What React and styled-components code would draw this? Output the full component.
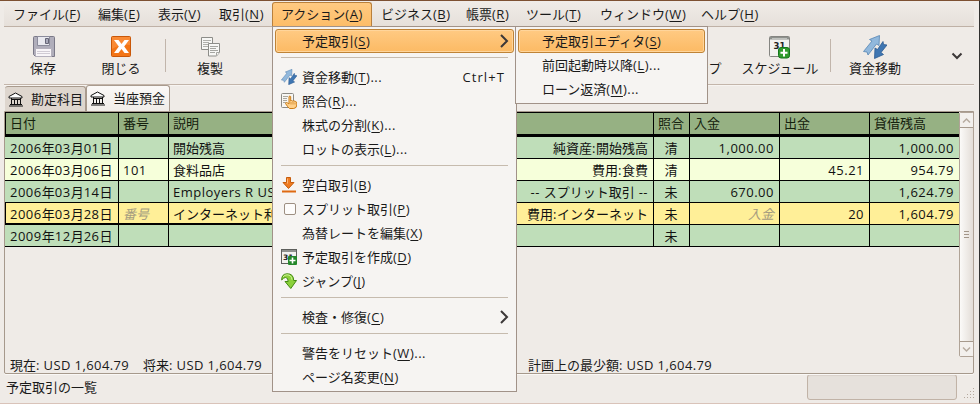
import React from "react";
import styled, { createGlobalStyle, css } from "styled-components";

const Global = createGlobalStyle`
  * { box-sizing: border-box; }
  body {
    margin: 0;
    background: #efebe7;
    font-family: "Open Sans", "Noto Sans CJK JP", sans-serif;
    font-size: 13px;
    line-height: 20px;
    color: #1a1a1a;
  }
`;

/* ---------- text ---------- */
const Label = styled.span`
  white-space: pre;
  font-family: "Noto Sans CJK JP", sans-serif;
  line-height: 20px;
`;
const Latin = styled.span`
  font-family: "Open Sans", sans-serif;
  letter-spacing: ${(p) => p.$ls}px;
`;
const Mnemonic = styled.span`
  text-decoration: underline;
  text-decoration-thickness: 1px;
  text-underline-offset: 2px;
  text-decoration-skip-ink: none;
`;
const Text = ({ children, k, tail = "", ls = 0.5 }) => (
  <Label>
    {children.split(/([\x20-\x7e]+)/).map((run, i) =>
      i % 2 ? <Latin key={i} $ls={ls}>{run}</Latin> : run
    )}
    {k && (
      <Latin $ls={ls}>
        (<Mnemonic>{k}</Mnemonic>){tail}
      </Latin>
    )}
  </Label>
);

/* ---------- window ---------- */
const Window = styled.div`
  position: relative;
  width: 980px;
  height: 404px;
  overflow: hidden;
  display: flex;
  flex-direction: column;
  padding: 0 5px 0 4px;
  background: #efebe7;
  border-top: 1px solid #7d5132;
  border-right: 1px solid #30302f;
  border-bottom: 1px solid #d9c3b9;
`;
const MenuBar = styled.nav`
  display: flex;
  height: 26px;
  flex: none;
  border-bottom: 1px solid #bfb1a6;
  background: linear-gradient(#f0ece8, #e6e0da);
`;
const MenuTitle = styled.div`
  width: ${(p) => p.$w}px;
  height: ${(p) => (p.$active ? 24 : 25)}px;
  margin-top: ${(p) => (p.$active ? 1 : 0)}px;
  padding: ${(p) => (p.$active ? 1 : 3)}px 0 0 ${(p) => (p.$active ? 8 : 9)}px;
  ${(p) =>
    p.$active &&
    css`
      border: 1px solid #b9803c;
      border-bottom: 0;
      border-radius: 3px 3px 0 0;
      background: linear-gradient(#ffca82, #fdbd68);
    `}
`;
const ToolBar = styled.div`
  display: flex;
  flex: none;
  height: 58px;
  border-bottom: 1px solid #c3b5aa;
  box-shadow: 0 1px #f7f4f1;
  padding-top: 7px;
`;
const Tool = styled.div`
  width: ${(p) => p.$w}px;
  display: flex;
  flex-direction: column;
  align-items: center;
  svg { width: 24px; height: 24px; display: block; margin: 1px 0 -1px; }
`;
const ToolSeparator = styled.div`
  width: 1px;
  height: 33px;
  margin-top: 5px;
  background: #c1b5ab;
`;
const Spacer = styled.div`
  width: ${(p) => p.$w}px;
  flex: none;
`;
const Overflow = styled.div`
  padding-top: 18px;
  svg { width: 12px; height: 8px; display: block; }
`;

/* ---------- notebook ---------- */
const Tabs = styled.div`
  display: flex;
  align-items: flex-end;
  height: 26px;
  flex: none;
  padding-left: 1px;
`;
const Tab = styled.div`
  display: flex;
  width: ${(p) => p.$w}px;
  height: ${(p) => (p.$active ? 26 : 25)}px;
  padding: ${(p) => (p.$active ? "2px 0 0 3px" : "2px 0 0 3px")};
  border: 1px solid #a99b8e;
  border-bottom: 0;
  border-left-width: ${(p) => (p.$active ? 1 : 0)}px;
  border-radius: 3px 3px 0 0;
  background: ${(p) => (p.$active ? "linear-gradient(#fbf9f7, #f0ece8)" : "#ded6ce")};
  svg { width: 16px; height: 16px; margin: 2px 7px 0 0; flex: none; }
`;
const Page = styled.div`
  position: relative;
  display: flex;
  flex-direction: column;
  height: 263px;
  flex: none;
  border: 1px solid #a6998c;
  border-radius: 0 0 2px 2px;
  box-shadow: 0 1px #faf8f6;
`;
const PageBody = styled.div`
  display: flex;
  height: 245px;
`;
const Register = styled.div`
  width: 954px;
`;
const columns = "114px 50px 230px 255px 36px 90px 90px 89px";
const Row = styled.div`
  display: grid;
  grid-template-columns: ${columns};
  height: ${(p) => (p.$head ? 25 : 22)}px;
  background: ${(p) => p.$bg};
  color: ${(p) => (p.$head ? "#14200d" : "#111")};
  border-bottom: ${(p) => (p.$head ? 3 : 1)}px solid #000;
  border-top: ${(p) => (p.$head ? 1 : 0)}px solid #000;
`;
const Cell = styled.div`
  display: flex;
  justify-content: ${(p) => p.$align || "flex-start"};
  height: 100%;
  min-width: 0;
  overflow: hidden;
  padding: ${(p) => (p.$head ? 0 : 1)}px 5px 0 4px;
  border-right: ${(p) => (p.$last ? 0 : 1)}px solid #000;
  ${(p) => p.$first && css`border-left: 1px solid ${p.$edge ? "#000" : "transparent"};`}
  ${(p) => p.$thick && css`box-shadow: inset 0 -1px #000;`}
  ${(p) => p.$hint && css`color: #a59c80; font-style: italic;`}
`;
const ScrollBar = styled.div`
  width: 15px;
  height: 245px;
  display: flex;
  flex-direction: column;
  justify-content: space-between;
  align-items: center;
  border: 1px solid #b0a397;
  border-radius: 2px;
  background: linear-gradient(90deg, #fbfaf8, #e3ddd7);
`;
const ScrollButton = styled.div`
  width: 13px;
  height: 15px;
  display: flex;
  align-items: center;
  justify-content: center;
  background: #f3f0ed;
  border: 0 solid #a6998c;
  ${(p) => (p.$up ? "border-bottom-width: 1px;" : "border-top-width: 1px;")}
  svg { width: 9px; height: 7px; }
`;
const Grip = styled.div`
  width: 5px;
  height: 7px;
  border: solid #a39688;
  border-width: 1px 0;
  background: linear-gradient(transparent 2px, #a39688 2px, #a39688 3px, transparent 3px);
`;
const Summary = styled.div`
  display: flex;
  padding-left: 5px;
  margin-top: -2px;
`;
const SummaryItem = styled.div`
  width: ${(p) => p.$w}px;
`;

/* ---------- status ---------- */
const StatusBar = styled.footer`
  display: flex;
  justify-content: space-between;
  height: 29px;
  padding: 3px 17px 0 2px;
`;
const Progress = styled.div`
  width: 150px;
  height: 26px;
  margin-top: -3px;
  border: 1px solid #c1b3a7;
  border-radius: 3px;
  background: #e6e1dc;
  box-shadow: inset 0 1px 1px #d9d1ca;
`;
const ResizeGrip = styled.svg`
  position: absolute;
  right: 3px;
  bottom: 3px;
  width: 12px;
  height: 12px;
`;

/* ---------- popup menus ---------- */
const Popup = styled.div`
  position: absolute;
  left: ${(p) => p.$x}px;
  top: 25px;
  width: ${(p) => p.$w}px;
  padding: 2px;
  border: 1px solid #a19288;
  background: #f6f4f2;
`;
const Item = styled.div`
  display: grid;
  grid-template-columns: ${(p) => p.$indent}px 1fr auto;
  align-items: center;
  height: 24px;
  border: 1px solid transparent;
  border-radius: 3px;
  padding: 0 8px 0 0;
  ${(p) =>
    p.$active &&
    css`
      border-color: #bf8336;
      background: linear-gradient(#ffca83, #fcba64);
      box-shadow: inset 0 0 0 1px #ffd59b;
    `}
`;
const IconSlot = styled.span`
  display: flex;
  padding-left: 5px;
  svg { width: 16px; height: 16px; flex: none; }
`;
const ArrowSlot = styled.span`
  margin-right: -4px;
  display: flex;
  svg { width: 10px; height: 14px; }
`;
const Divider = styled.div`
  height: 12px;
  padding: 4px 6px 0;
  &::before { content: ""; display: block; height: 1px; background: #c6bbae; }
`;
const CheckBox = styled.span`
  width: 12px;
  height: 12px;
  margin-left: 3px;
  border: 1px solid #9d8f82;
  border-radius: 2px;
  background: #fdfcfb;
`;

/* ---------- icons ---------- */
const SaveIcon = () => (
  <svg viewBox="0 0 24 24">
    <path d="M3.500 1.500h19q1 0 1 1v19h-19l-2-2v-17q0-1 1-1z" fill="#b0aebb" stroke="#7b7988" />
    <path d="M6.500 1.500h12v9h-12z" fill="#e9e9ef" stroke="#8b8b9b" />
    <path d="M14.500 3.500h3v5h-3z" fill="#a9a9ba" stroke="#666677" />
    <path d="M4.500 13.500h16v8h-16z" fill="#f8f5f8" stroke="#b4b0bc" />
    <path d="M6 16.500h13M6 18.500h13" stroke="#d0cbd4" />
  </svg>
);
const CloseIcon = () => (
  <svg viewBox="0 0 24 24">
    <rect x="2.500" y="1.500" width="19" height="20" rx="1" fill="#f37516" stroke="#c95708" />
    <path d="M3 2h18v8Q12 9 3 14z" fill="#f98a34" />
    <path d="M5 5h4.500l3 4 3-4H20l-4.800 6.500L20 18h-4.500l-3-4-3 4H5l4.800-6.500z" fill="#fff" />
  </svg>
);
const CopyIcon = () => (
  <svg viewBox="0 0 24 24" fill="#f7f7f5" stroke="#8d8d89">
    <path d="M3.500 2.500h11v12h-11z" />
    <path d="M5 5.500h8M5 7.500h6M5 9.500h8M5 11.500h5" stroke="#b0b0ac" />
    <path d="M10.500 8.500h11v9l-3 3.500h-8z" />
    <path d="M12 11.500h8M12 13.500h6M12 15.500h8M12 17.500h5M18.500 20.500v-3h3" stroke="#a5a5a1" />
  </svg>
);
const Digits = styled.text`
  font: bold ${(p) => p.$size}px "DejaVu Sans", sans-serif;
  fill: #222;
`;
const CalendarIcon = () => (
  <svg viewBox="0 0 24 24">
    <rect x="1.500" y="1.500" width="20" height="20" rx="1" fill="#f2f2ef" stroke="#858581" />
    <path d="M2 2h19v2.500H2z" fill="#8e918d" />
    <path d="M4 3.500h15" stroke="#bfc1bd" />
    <Digits x="5.500" y="13.500" $size={8.5}>31</Digits>
    <rect x="10.500" y="12.500" width="11" height="10.500" rx="2.500" fill="#309b2d" stroke="#13761a" />
    <path d="M16 14v7.500M12.500 17.700h7" stroke="#fff" strokeWidth="2" />
  </svg>
);
const SmallCalendarIcon = () => (
  <svg viewBox="0 0 16 16">
    <rect x=".5" y=".5" width="15" height="14" fill="#f2f2ef" stroke="#5d5f5c" />
    <path d="M1 1h14v2H1z" fill="#8e918d" />
    <Digits x="2" y="11" $size={7.5}>31</Digits>
    <rect x="7" y="7" width="9" height="9" rx="1" fill="#23872a" />
    <path d="M11.500 8.500v6M8.500 11.500h6" stroke="#fff" strokeWidth="1.600" />
  </svg>
);
const TransferIcon = () => (
  <svg viewBox="0 0 24 24">
    <path d="M16.500 .5 16 10.500l-2.500-1.500L5 20l-1-3-3.500-.5L9 6 6.500 4.500z" fill="#91b8dc" stroke="#5685b4" strokeWidth=".8" />
    <path d="M11.500 23.500 12 13l2.500 1.500L20 6.500l.5 3 3.500.5-6 7.500 2.500 2z" fill="#3f76b2" stroke="#2c5a91" strokeWidth=".8" />
  </svg>
);
const ReconcileIcon = () => (
  <svg viewBox="0 0 16 16">
    <rect x=".5" y=".5" width="12" height="14" rx="1" fill="#f7f6f3" stroke="#8c8a84" />
    <path d="M2 3.500h5M2 5.500h4M2 7.500h4M2 9.500h3" stroke="#aaa79f" />
    <path d="M8 3.500q1-1 1.700 0V8q.8-1 1.700 0 .8-.7 1.600.2 1-.6 1.800.5 1 0 1 1.300v2q0 3-3 3.500H8.500Q7 14.500 4.500 10.500q.6-1.700 2.200-.5L8 11z" fill="#ffd08a" stroke="#cc7d16" />
    <path d="M10 9v2.500M12 9v2.500M14 9.500v2" stroke="#cc7d16" strokeWidth=".7" />
  </svg>
);
const DownIcon = () => (
  <svg viewBox="0 0 16 16">
    <path d="M5.500.5h4V5.500h3.500L7.500 11.500 2 5.500h3.500z" fill="#ef7b20" stroke="#c75c0c" />
    <path d="M6.500 1.500v5" stroke="#ffb474" fill="none" />
    <path d="M1 13.500h14v2H1z" fill="#df6a12" />
  </svg>
);
const JumpIcon = () => (
  <svg viewBox="0 0 16 16">
    <path d="M.7 7Q.5 1 6 .8q6.500-.3 6.700 6.700h2.800L9.800 15.500 4 8.500h3.200q0-4-2.700-4Q2.500 4.600.7 7z" fill="#8bd13a" stroke="#438a12" />
    <path d="M2 4q1.500-2.200 4-2.200 4.500 0 5 5" fill="none" stroke="#d0f29c" />
  </svg>
);
const BankIcon = () => (
  <svg viewBox="0 0 16 16" fill="none" stroke="#111">
    <path d="M1 7v-1.500L7.500 2 14 5.500V7z" fill="#fff" />
    <path d="M3 8.500h9.500M3.500 7v6M6.500 8v5M9.500 8v5M12.500 7v6M2 13.500h12M1 15h14" />
  </svg>
);
const Chevron = ({ d, box, color = "#3c3838", w = 2 }) => (
  <svg viewBox={box} fill="none" stroke={color} strokeWidth={w}>
    <path d={d} />
  </svg>
);

/* ---------- data ---------- */
const titles = [
  ["ファイル", "F", 85],
  ["編集", "E", 60],
  ["表示", "V", 61],
  ["取引", "N", 58],
  ["アクション", "A", 100, true],
  ["ビジネス", "B", 85],
  ["帳票", "R", 60],
  ["ツール", "T", 74],
  ["ウィンドウ", "W", 101],
  ["ヘルプ", "H", 76],
];
const actions = [
  { t: "予定取引", k: "S", arrow: true, active: true },
  null,
  { t: "資金移動", k: "T", tail: "...", icon: <TransferIcon />, accel: "Ctrl+T" },
  { t: "照合", k: "R", tail: "...", icon: <ReconcileIcon /> },
  { t: "株式の分割", k: "K", tail: "..." },
  { t: "ロットの表示", k: "L", tail: "..." },
  null,
  { t: "空白取引", k: "B", icon: <DownIcon /> },
  { t: "スプリット取引", k: "P", icon: <CheckBox /> },
  { t: "為替レートを編集", k: "X" },
  { t: "予定取引を作成", k: "D", icon: <SmallCalendarIcon /> },
  { t: "ジャンプ", k: "J", icon: <JumpIcon /> },
  null,
  { t: "検査・修復", k: "C", arrow: true },
  null,
  { t: "警告をリセット", k: "W", tail: "..." },
  { t: "ページ名変更", k: "N" },
];
const scheduled = [
  { t: "予定取引エディタ", k: "S", active: true },
  { t: "前回起動時以降", k: "L", tail: "..." },
  { t: "ローン返済", k: "M", tail: "..." },
];
const GREEN = "#bfdeb9";
const rows = [
  { bg: "#96b183", head: true, c: ["日付", "番号", "説明", "", "照合", "入金", "出金", "貸借残高"] },
  { bg: GREEN, c: ["2006年03月01日", "", "開始残高", "純資産:開始残高", "清", "1,000.00", "", "1,000.00"] },
  { bg: "#f6ffda", c: ["2006年03月06日", "101", "食料品店", "費用:食費", "清", "", "45.21", "954.79"] },
  { bg: GREEN, c: ["2006年03月14日", "", "Employers R US", "-- スプリット取引 --", "未", "670.00", "", "1,624.79"] },
  { bg: "#ffef98", edit: true, c: ["2006年03月28日", "番号", "インターネット利用", "費用:インターネット", "未", "入金", "20", "1,604.79"] },
  { bg: GREEN, c: ["2009年12月26日", "", "", "", "未", "", "", ""] },
];
const alignOf = (i, head) =>
  i === 4 ? "center" : !head && (i === 3 || i > 4) ? "flex-end" : "flex-start";

const Menu = ({ items, x, w, indent = 26 }) => (
  <Popup $x={x} $w={w}>
    {items.map((it, i) =>
      it ? (
        <Item key={i} $active={it.active} $indent={indent}>
          <IconSlot>{it.icon}</IconSlot>
          <Text k={it.k} tail={it.tail}>{it.t}</Text>
          {it.accel && <Text ls={1.1}>{it.accel}</Text>}
          {it.arrow && (
            <ArrowSlot>
              <Chevron box="0 0 10 14" d="M2 1l6 6-6 6" />
            </ArrowSlot>
          )}
        </Item>
      ) : (
        <Divider key={i} />
      )
    )}
  </Popup>
);

export default function App() {
  return (
    <>
      <Global />
      <Window>
        <MenuBar>
          {titles.map(([t, k, w, active]) => (
            <React.Fragment key={t}>
              {active && <Spacer $w={4} />}
              <MenuTitle $w={w} $active={active}>
                <Text k={k}>{t}</Text>
              </MenuTitle>
            </React.Fragment>
          ))}
        </MenuBar>
        <ToolBar>
          <Tool $w={78}><SaveIcon /><Text>保存</Text></Tool>
          <Tool $w={78}><CloseIcon /><Text>閉じる</Text></Tool>
          <Spacer $w={5} />
          <ToolSeparator />
          <Tool $w={88}><CopyIcon /><Text>複製</Text></Tool>
          <Spacer $w={407} />
          <Tool $w={70}><JumpIcon /><Text>ジャンプ</Text></Tool>
          <Tool $w={98}><CalendarIcon /><Text>スケジュール</Text></Tool>
          <Spacer $w={1} />
          <ToolSeparator />
          <Tool $w={88}><TransferIcon /><Text>資金移動</Text></Tool>
          <Spacer $w={32} />
          <Overflow>
            <Chevron box="0 0 12 8" d="M1.500 1.500L6 6l4.500-4.500" />
          </Overflow>
        </ToolBar>
        <Tabs>
          <Tab $w={81}><BankIcon /><Text>勘定科目</Text></Tab>
          <Tab $w={84} $active><BankIcon /><Text>当座預金</Text></Tab>
        </Tabs>
        <Page>
          <PageBody>
            <Register>
              {rows.map((r, ri) => (
                <Row key={ri} $bg={r.bg} $head={r.head}>
                  {r.c.map((v, i) => (
                    <Cell
                      key={i}
                      $head={r.head}
                      $first={i === 0}
                      $last={i === 7}
                      $edge={r.head || r.edit}
                      $thick={r.edit && i < 3}
                      $hint={r.edit && (i === 1 || i === 5)}
                      $align={alignOf(i, r.head)}
                    >
                      <Text>{v}</Text>
                    </Cell>
                  ))}
                </Row>
              ))}
            </Register>
            <ScrollBar>
              <ScrollButton $up><Chevron box="0 0 9 7" d="M1 5.500L4.500 2 8 5.500" color="#b7aba0" w={1.5} /></ScrollButton>
              <Grip />
              <ScrollButton><Chevron box="0 0 9 7" d="M1 1.500L4.500 5 8 1.500" color="#b7aba0" w={1.5} /></ScrollButton>
            </ScrollBar>
          </PageBody>
          <Summary>
            <SummaryItem $w={133}><Text ls={0.4}>現在: USD 1,604.79</Text></SummaryItem>
            <SummaryItem $w={385}><Text ls={0.4}>将来: USD 1,604.79</Text></SummaryItem>
            <SummaryItem $w={200}><Text ls={0.4}>計画上の最少額: USD 1,604.79</Text></SummaryItem>
          </Summary>
        </Page>
        <StatusBar>
          <Text>予定取引の一覧</Text>
          <Progress />
        </StatusBar>
        <ResizeGrip viewBox="0 0 12 12" fill="#b5a99e">
          {[[9, 0], [6, 3], [9, 3], [3, 6], [6, 6], [9, 6], [0, 9], [3, 9], [6, 9], [9, 9]].map(([x, y]) => (
            <rect key={`${x}-${y}`} x={x} y={y} width="1" height="1" />
          ))}
        </ResizeGrip>
        <Menu items={actions} x={272} w={245} />
        <Menu items={scheduled} x={515} w={193} indent={23} />
      </Window>
    </>
  );
}
